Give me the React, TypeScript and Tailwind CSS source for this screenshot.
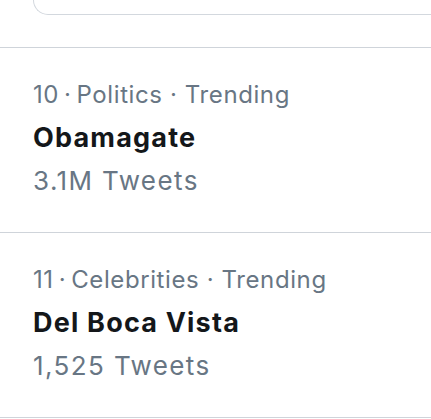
export default function App() {
  const trends = [
    { rank: 10, cat: "Politics", title: "Obamagate", count: "3.1M Tweets" },
    { rank: 11, cat: "Celebrities", title: "Del Boca Vista", count: "1,525 Tweets" },
  ];
  return (
    <div
      className="w-[431px] h-[419px] bg-white overflow-hidden"
      style={{ fontFamily: "Inter, 'Noto Sans', sans-serif" }}
    >
      <div className="h-[48px] border-b border-[#cfd4da]">
        <div className="h-[15px] ml-[33px] border-l border-b border-[#d3d8de] rounded-bl-[16px]" />
      </div>
      {trends.map((t) => (
        <div key={t.rank} className="pl-[33px] pt-[25px] pb-[30px] border-b border-[#cfd4da]">
          <div className="text-[24px] leading-[43px] tracking-[0.6px] text-[#687684] whitespace-nowrap">
            {t.rank}&#8201;·&#8201;{t.cat} · Trending
          </div>
          <div className="text-[27px] leading-[43px] tracking-[1.2px] font-bold text-[#14171a] whitespace-nowrap">
            {t.title}
          </div>
          <div className="text-[26px] leading-[43px] tracking-[1.4px] text-[#687684] whitespace-nowrap">
            {t.count}
          </div>
        </div>
      ))}
    </div>
  );
}
